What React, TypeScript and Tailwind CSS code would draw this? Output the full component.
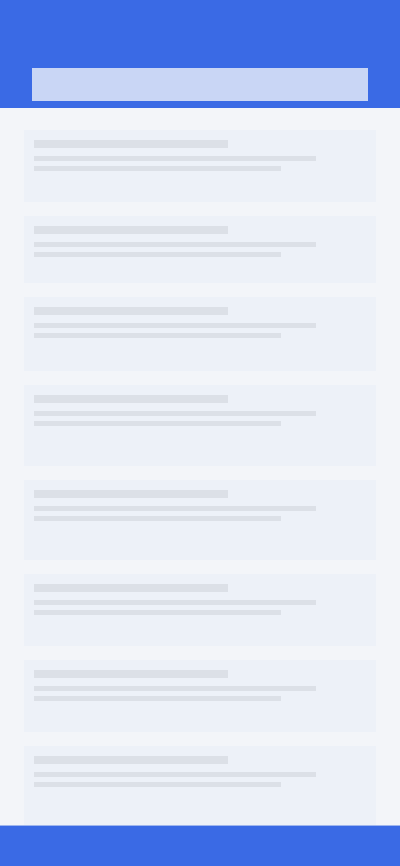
import React from "react";

const heights = ["h-[72px]", "h-[67px]", "h-[74px]", "h-[81px]", "h-[80px]", "h-[72px]", "h-[72px]", "h-[80px]"];

function SkeletonCard({ h }: { h: string }) {
  return (
    <div className={`${h} shrink-0 bg-[#edf1f8] pl-[10px] pt-[10px]`}>
      <div className="h-[8px] w-[194px] bg-[#dce0e7]" />
      <div className="mt-[8px] h-[5px] w-[282px] bg-[#dce0e7]" />
      <div className="mt-[5px] h-[5px] w-[247px] bg-[#dce0e7]" />
    </div>
  );
}

export default function App() {
  return (
    <div className="flex h-[866px] w-[400px] flex-col overflow-hidden bg-[#f3f5f9]" style={{ fontFamily: "Inter, sans-serif" }}>
      <header className="h-[108px] shrink-0 bg-[#3a6ae5] px-8 pt-[68px]">
        <div className="h-[33px] bg-[#c9d6f5]" />
      </header>
      <main className="flex flex-1 flex-col gap-[14px] overflow-hidden px-6 pt-[22px]">
        {heights.map((h, i) => (
          <SkeletonCard key={i} h={h} />
        ))}
      </main>
      <footer className="h-[41px] shrink-0 border-t border-[#9fb6ee] bg-[#3a6ae5]" />
    </div>
  );
}
